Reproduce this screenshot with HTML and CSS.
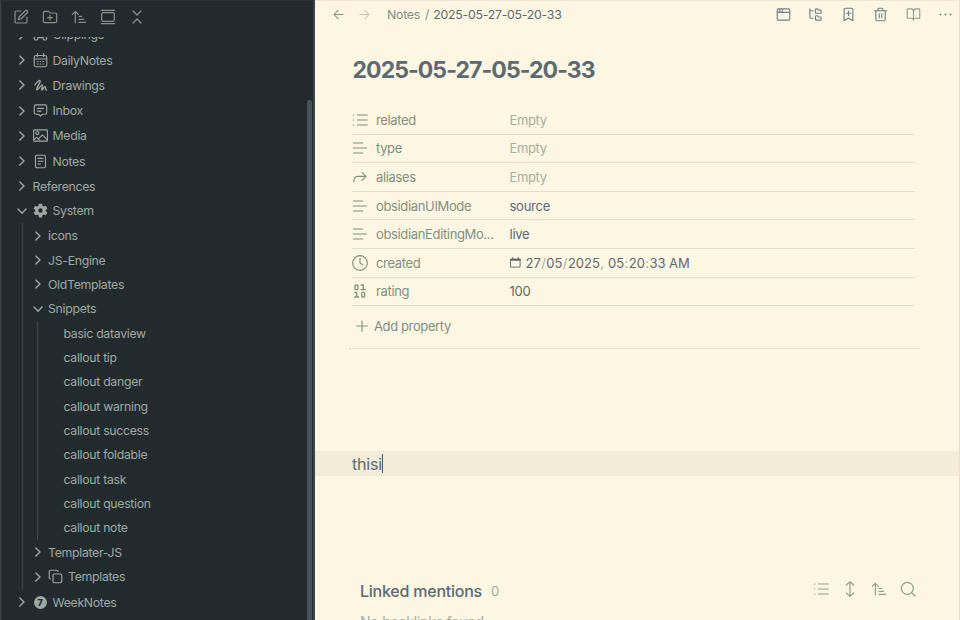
FILE: index.html
```html
<!DOCTYPE html>
<html lang="en">
<head>
<meta charset="utf-8">
<title>2025-05-27-05-20-33</title>
<link rel="stylesheet" href="styles.css">
</head>
<body>
<svg class="defs" aria-hidden="true">
  <symbol id="chev" viewBox="0 0 10 10"><path d="M2.8 1 7 5 2.8 9"/></symbol>
  <symbol id="down" viewBox="0 0 10 10"><path d="M1 3 5 7.2 9 3"/></symbol>
  <symbol id="lines" viewBox="0 0 24 24"><path d="M2 4.500h14M2 12h20M2 19.500h14"/></symbol>
  <symbol id="list" viewBox="0 0 24 24"><path d="M8 4.500h15M8 12h15M8 19.500h15M2 4.500h.6M2 12h.6M2 19.500h.6"/></symbol>
  <symbol id="sort" viewBox="0 0 24 24"><path d="m2 8 4.500-4.500L11 8M6.500 4v17M12 11h4M12 15.500h7M12 20h10"/></symbol>
</svg>
<div class="app">
  <aside class="sidebar">
    <header class="tools">
      <svg viewBox="0 0 24 24"><path d="M12 3H5a2 2 0 0 0-2 2v14a2 2 0 0 0 2 2h14a2 2 0 0 0 2-2v-7"/><path d="M18.400 2.600a2.100 2.100 0 0 1 3 3L12.400 14.600 8 16l1.400-4.400Z"/></svg>
      <svg viewBox="0 0 24 24"><path d="M12 9.500v7M8.500 13h7M20 20.500a2 2 0 0 0 2-2V8a2 2 0 0 0-2-2h-8l-2-2.500H4a2 2 0 0 0-2 2v13a2 2 0 0 0 2 2Z"/></svg>
      <svg><use href="#sort"/></svg>
      <svg viewBox="0 0 24 24"><path d="M2 2h20M2 22h20"/><rect x="2.500" y="5.500" width="19" height="13" rx="2"/></svg>
      <svg viewBox="0 0 24 24"><path d="m6 3 6 6 6-6M6 21l6-6 6 6"/></svg>
    </header>
    <nav class="tree">
      <div class="list">
        <div class="row tall"><svg class="c"><use href="#chev"/></svg><svg class="i" viewBox="0 0 24 24"><path d="M5 7h14l2 8M5 7l-2 8M9 17h6"/><circle cx="5" cy="18" r="3"/><circle cx="19" cy="18" r="3"/></svg><span>Clippings</span></div>
        <div class="row tall"><svg class="c"><use href="#chev"/></svg><svg class="i" viewBox="0 0 24 24"><rect x="2" y="4" width="20" height="18" rx="3"/><path d="M7 1v5M17 1v5M2 9.500h20M7 13.500h1M11.500 13.500h1M16 13.500h1M7 17.500h1M11.500 17.500h1M16 17.500h1"/></svg><span>DailyNotes</span></div>
        <div class="row tall"><svg class="c"><use href="#chev"/></svg><svg class="i" viewBox="0 0 24 24"><path class="bold" d="M3 11C7 6 10 3 11.500 4.500 13 6.500 4 17 6 19c2 1 7-9 9-8s-2.500 7-1 8 4-6 5.500-5-.5 5 2 5.500"/></svg><span>Drawings</span></div>
        <div class="row tall"><svg class="c"><use href="#chev"/></svg><svg class="i" viewBox="0 0 24 24"><path d="M5 3h14a3 3 0 0 1 3 3v9a3 3 0 0 1-3 3h-4l-3 3-3-3H5a3 3 0 0 1-3-3V6a3 3 0 0 1 3-3ZM7 8.500h10M7 13h6"/></svg><span>Inbox</span></div>
        <div class="row tall"><svg class="c"><use href="#chev"/></svg><svg class="i" viewBox="0 0 24 24"><rect x="1" y="3" width="22" height="18" rx="1"/><circle cx="7" cy="8" r="2.500"/><path d="m9 17 6-6 8 8M1 19l5-4 4 4"/></svg><span>Media</span></div>
        <div class="row tall"><svg class="c"><use href="#chev"/></svg><svg class="i" viewBox="0 0 24 24"><rect x="4" y="2" width="16" height="20" rx="2"/><path d="M8 7h8M8 11.500h8M8 16h4"/></svg><span>Notes</span></div>
        <div class="row"><svg class="c"><use href="#chev"/></svg><span>References</span></div>
        <div class="row tall"><svg class="c"><use href="#down"/></svg><svg class="i solid" viewBox="0 0 24 24"><path fill-rule="evenodd" d="M9.500 1h5l.7 3.400 2 1.200 3.300-1.200 2.500 4.300-2.600 2.300v2l2.600 2.300-2.500 4.300-3.300-1.200-2 1.200-.7 3.400h-5l-.7-3.400-2-1.200-3.300 1.200L1 15.300 3.600 13v-2L1 8.700l2.500-4.300 3.300 1.200 2-1.200ZM12 8.500a3.500 3.500 0 1 0 0 7 3.500 3.500 0 0 0 0-7Z"/></svg><span>System</span></div>
        <div class="children">
          <div class="row"><svg class="c"><use href="#chev"/></svg><span>icons</span></div>
          <div class="row"><svg class="c"><use href="#chev"/></svg><span>JS-Engine</span></div>
          <div class="row"><svg class="c"><use href="#chev"/></svg><span>OldTemplates</span></div>
          <div class="row"><svg class="c"><use href="#down"/></svg><span>Snippets</span></div>
          <div class="children files">
            <div class="row"><span>basic dataview</span></div>
            <div class="row"><span>callout tip</span></div>
            <div class="row"><span>callout danger</span></div>
            <div class="row"><span>callout warning</span></div>
            <div class="row"><span>callout success</span></div>
            <div class="row"><span>callout foldable</span></div>
            <div class="row"><span>callout task</span></div>
            <div class="row"><span>callout question</span></div>
            <div class="row"><span>callout note</span></div>
          </div>
          <div class="row"><svg class="c"><use href="#chev"/></svg><span>Templater-JS</span></div>
          <div class="row tall"><svg class="c"><use href="#chev"/></svg><svg class="i" viewBox="0 0 24 24"><rect x="8" y="8" width="14" height="14" rx="2"/><path d="M4 16a2 2 0 0 1-2-2V4a2 2 0 0 1 2-2h10a2 2 0 0 1 2 2"/></svg><span>Templates</span></div>
        </div>
        <div class="row tall"><svg class="c"><use href="#chev"/></svg><i class="seven">7</i><span>WeekNotes</span></div>
      </div>
      <div class="track"><div class="thumb"></div></div>
    </nav>
  </aside>
  <main class="pane">
    <header class="bar">
      <svg class="back" viewBox="0 0 12 12"><path d="M11 6H1.500M5.500 1.500 1 6l4.500 4.500"/></svg>
      <svg class="fwd" viewBox="0 0 12 12"><path d="M1 6h9.500M6.500 1.500 11 6l-4.500 4.500"/></svg>
      <div class="crumbs"><span>Notes</span><span class="slash">/</span><b>2025-05-27-05-20-33</b></div>
      <div class="actions">
        <svg viewBox="0 0 24 24"><rect x="2" y="3" width="20" height="18" rx="2"/><path d="M2 8.500h20M6 3.500v4M10 3.500v4"/></svg>
        <svg viewBox="0 0 24 24"><path d="M20 10a1 1 0 0 0 1-1V6a1 1 0 0 0-1-1h-2.500a1 1 0 0 1-.8-.4l-.9-1.200A1 1 0 0 0 15 3h-2a1 1 0 0 0-1 1v5a1 1 0 0 0 1 1ZM20 21a1 1 0 0 0 1-1v-3a1 1 0 0 0-1-1h-2.900a1 1 0 0 1-.9-.6l-.4-.8a1 1 0 0 0-.9-.6H13a1 1 0 0 0-1 1v5a1 1 0 0 0 1 1ZM3 3v13a2 2 0 0 0 2 2h3M3 6h5"/></svg>
        <svg viewBox="0 0 24 24"><path d="m19 22-7-4.500L5 22V4a2 2 0 0 1 2-2h10a2 2 0 0 1 2 2ZM12 6.500v7M8.500 10h7"/></svg>
        <svg viewBox="0 0 24 24"><path d="M2 6h20M19.500 6v14a2 2 0 0 1-2 2h-11a2 2 0 0 1-2-2V6M8 6V4a2 2 0 0 1 2-2h4a2 2 0 0 1 2 2v2M10 11v6M14 11v6"/></svg>
        <svg class="soft" viewBox="0 0 24 24"><path d="M12 6.500v15M3 18a1 1 0 0 1-1-1V4a1 1 0 0 1 1-1h5a4 4 0 0 1 4 4 4 4 0 0 1 4-4h5a1 1 0 0 1 1 1v13a1 1 0 0 1-1 1h-6a3 3 0 0 0-3 3 3 3 0 0 0-3-3Z"/></svg>
        <svg viewBox="0 0 24 24"><path class="dots" d="M4 12h.01M12 12h.01M20 12h.01"/></svg>
      </div>
    </header>
    <h1>2025-05-27-05-20-33</h1>
    <section class="props">
      <div class="prop"><svg><use href="#list"/></svg><label>related</label><em>Empty</em></div>
      <div class="prop"><svg><use href="#lines"/></svg><label>type</label><em>Empty</em></div>
      <div class="prop"><svg viewBox="0 0 24 24"><path d="m15 5 6 6-6 6M3 19v-2a6 6 0 0 1 6-6h12"/></svg><label>aliases</label><em>Empty</em></div>
      <div class="prop"><svg><use href="#lines"/></svg><label>obsidianUIMode</label><span>source</span></div>
      <div class="prop"><svg><use href="#lines"/></svg><label>obsidianEditingMo...</label><span>live</span></div>
      <div class="prop"><svg viewBox="0 0 24 24"><circle cx="12" cy="12" r="11"/><path d="M12 5v7l4 2.500"/></svg><label>created</label><span class="date"><svg viewBox="0 0 12 12"><path d="M1 2.500h10v8.500H1ZM3 .5v2M9 .5v2"/><path class="band" d="M1 3h10"/></svg>27<u>/</u>05<u>/</u>2025<u>,</u> 05<u>:</u>20<u>:</u>33 AM</span></div>
      <div class="prop"><svg class="binary" viewBox="0 0 24 24"><rect x="4.500" y="3" width="4.500" height="7" rx="1.500"/><rect x="14.500" y="14" width="4.500" height="7" rx="1.500"/><path d="M14 10h6M17 10V3h-3M4 21h6M7 21v-7H4"/></svg><label>rating</label><span>100</span></div>
      <button class="add"><svg viewBox="0 0 12 12"><path d="M6 .7v10.600M.7 6h10.600"/></svg>Add property</button>
    </section>
    <div class="editor"><span>thisi</span><i class="caret"></i></div>
    <section class="links">
      <h2>Linked mentions</h2><span class="count">0</span>
      <div class="linktools">
        <svg><use href="#list"/></svg>
        <svg viewBox="0 0 24 24"><path d="M12 1v22M6.500 6 12 1l5.500 5M6.500 18l5.500 5 5.500-5"/></svg>
        <svg><use href="#sort"/></svg>
        <svg viewBox="0 0 24 24"><circle cx="11" cy="11" r="9"/><path d="m17.500 17.500 5 5"/></svg>
      </div>
    </section>
    <p class="none">No backlinks found.</p>
  </main>
</div>
</body>
</html>
```
FILE: styles.css
```css
* { box-sizing: border-box; }
body { margin: 0; font-family: Inter, "Liberation Sans", sans-serif; overflow: hidden; }
svg { display: block; flex: none; fill: none; stroke: currentColor; stroke-width: 1.8; stroke-linecap: round; stroke-linejoin: round; }
.defs { width: 0; height: 0; position: absolute; }
.app { display: flex; width: 960px; height: 620px; overflow: hidden; }

.sidebar { width: 315px; flex: none; display: flex; flex-direction: column; background: #232a2e; color: #9da9a0; border-left: 1px solid #3d484d; border-right: 2px solid #3a464c; border-top: 1px solid #2b3337; }
.tools { height: 36px; flex: none; display: flex; align-items: center; gap: 13px; padding: 0 0 4px 12px; color: #859289; }
.tools svg { width: 16px; height: 16px; }
.tree { flex: 1; min-height: 0; display: flex; overflow: hidden; }
.list { flex: 1; margin-top: -14.95px; padding-left: 16px; font-size: 12.3px; letter-spacing: -.31px; }
.row { height: 24.35px; display: flex; align-items: center; white-space: nowrap; }
.row.tall { height: 25.3px; }
.row .c { width: 10px; height: 10px; margin-right: 5.500px; stroke-width: 1.4; }
.row .i { width: 15px; height: 15px; margin-right: 5px; stroke-width: 1.8; }
.row .bold { stroke-width: 2.2; }
.row .solid { fill: currentColor; stroke: none; }
.seven { width: 13px; height: 13px; margin: 0 6px 0 1px; border-radius: 50%; background: #9da9a0; color: #232a2e; font: 800 9px/13px Inter, sans-serif; text-align: center; }
.children { margin-left: 4.500px; padding-left: 10px; border-left: 1px solid #3d484d; }
.files .row { padding-left: 15.500px; }
.track { width: 6px; flex: none; padding-top: 63px; }
.thumb { width: 5px; height: 530px; border-radius: 3px 3px 0 0; background: #475258; }

.pane { flex: 1; min-width: 0; display: flex; flex-direction: column; background: #fdf6e3; color: #5c6a72; border-top: 1px solid #efe7d2; border-right: 1px solid #e8e0cc; }
.bar { height: 27px; flex: none; display: flex; align-items: center; padding-left: 18px; }
.bar > svg { width: 11px; height: 11px; stroke-width: 1.1; color: #829181; }
.bar > .fwd { margin-left: 15px; color: #c3c7b2; }
.crumbs { margin-left: 17px; display: flex; font-size: 12.3px; letter-spacing: -.24px; color: #829181; }
.crumbs .slash { margin: 0 4px 0 5px; }
.crumbs b { font-weight: 400; color: #5c6a72; }
.actions { margin-left: auto; padding-right: 6px; display: flex; gap: 17.400px; color: #708089; }
.actions svg { width: 15px; height: 15px; }
.actions .soft { color: #929e8f; }
.actions .dots { stroke-width: 3; }
h1 { margin: 25px 0 0 37.500px; font-size: 23px; line-height: 34px; font-weight: 700; letter-spacing: -.93px; }
.props { margin: 19px 44px 0 34px; height: 243px; flex: none; border-bottom: 1px dotted #d5cfba; padding: 0 0 0 3px; width: 570px; }
.prop { height: 28.6px; width: 563px; border-bottom: 1px solid #e4decb; display: flex; align-items: center; font-size: 13px; letter-spacing: -.35px; color: #829181; }
.prop > svg { width: 16px; height: 16px; margin-right: 8px; stroke-width: 1.700; }
.prop > .binary { stroke-width: 2; }
.prop label { width: 133.500px; }
.prop em { font-style: normal; color: #a6b0a0; }
.prop span { color: #5c6a72; letter-spacing: -.25px; }
.prop .date { display: flex; align-items: center; white-space: pre; letter-spacing: -.05px; }
.date svg { width: 11px; height: 11px; margin-right: 5px; stroke-width: 1; }
.date .band { stroke-width: 2; }
.date u { text-decoration: none; color: #a6b0a0; padding: 0 .5px; }
.add { border: 0; background: none; display: flex; align-items: center; margin-top: 9px; height: 22px; padding: 0 0 0 4px; font: 400 13px Inter, sans-serif; letter-spacing: -.38px; color: #829181; }
.add svg { width: 12px; height: 12px; margin-right: 6px; stroke-width: 1.1; }
.editor { height: 25px; flex: none; margin-top: 102px; background: #f3ecd9; padding-left: 37px; display: flex; align-items: center; font-size: 16px; letter-spacing: -.2px; }
.caret { width: 1px; height: 19px; background: #4c5960; }
.links { height: 30px; flex: none; margin-top: 100px; padding-left: 45px; display: flex; align-items: center; }
h2 { margin: 0; font-size: 16px; font-weight: 500; letter-spacing: -.23px; }
.count { margin-left: 9px; font-size: 13px; color: #a0ab99; }
.linktools { margin: -5px 43px 0 auto; display: flex; gap: 13px; color: #93a08f; }
.linktools svg { width: 16px; height: 16px; }
.none { margin: 6px 0 0 45px; font-size: 14px; line-height: 20px; letter-spacing: -.2px; color: #a6b0a0; white-space: nowrap; }
```
